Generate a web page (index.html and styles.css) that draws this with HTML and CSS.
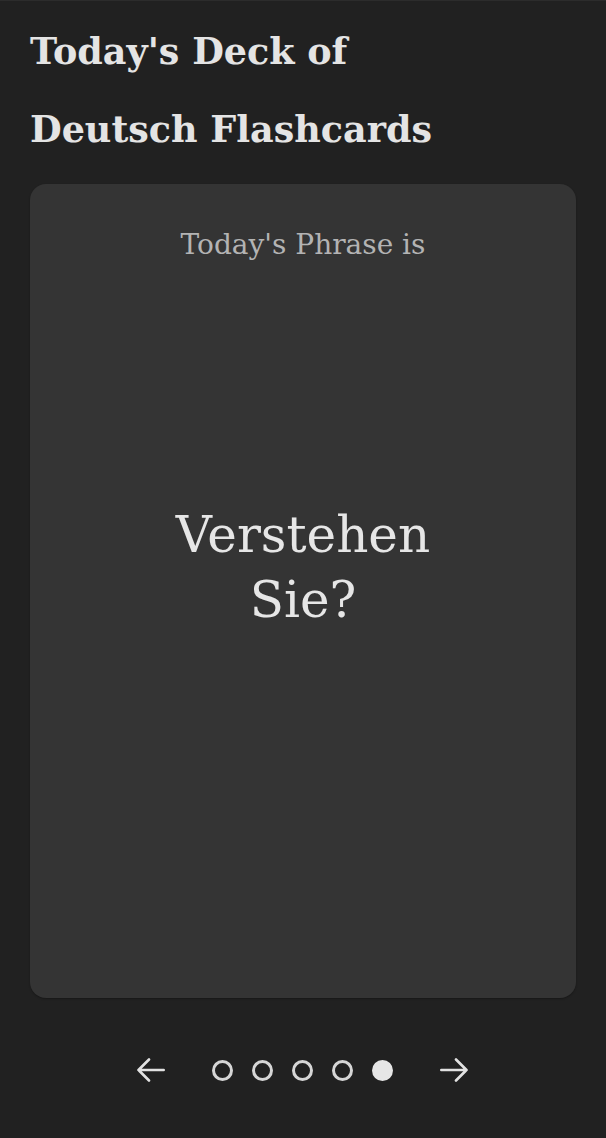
FILE: index.html
```html
<!DOCTYPE html>
<html lang="en">
<head>
<meta charset="utf-8">
<title>Deutsch Flashcards</title>
<link rel="stylesheet" href="styles.css">
</head>
<body>
<main class="page">
  <h1 class="title">Today's Deck of<br>Deutsch Flashcards</h1>
  <section class="card">
    <p class="card-label">Today's Phrase is</p>
    <p class="card-phrase">Verstehen<br>Sie?</p>
  </section>
  <nav class="pager">
    <button class="arrow" aria-label="Previous">
      <svg viewBox="0 0 28 28" width="28" height="28"><path d="M26.7 14H1.5M12 3.5L1.5 14 12 24.5" fill="none" stroke="currentColor" stroke-width="2.6" stroke-linecap="round" stroke-linejoin="round"/></svg>
    </button>
    <div class="dots">
      <span class="dot"></span>
      <span class="dot"></span>
      <span class="dot"></span>
      <span class="dot"></span>
      <span class="dot active"></span>
    </div>
    <button class="arrow" aria-label="Next">
      <svg viewBox="0 0 28 28" width="28" height="28"><path d="M1.3 14h25.2M16 3.5L26.5 14 16 24.5" fill="none" stroke="currentColor" stroke-width="2.6" stroke-linecap="round" stroke-linejoin="round"/></svg>
    </button>
  </nav>
</main>
</body>
</html>
```
FILE: styles.css
```css
html, body {
  margin: 0;
  padding: 0;
  background: #212121;
}
body {
  font-family: "DejaVu Serif", "Liberation Serif", serif;
  color: #e2e2e2;
  border-top: 1px solid #2c2c2c;
}
.page {
  padding: 0 30px;
  display: flex;
  flex-direction: column;
}
.title {
  margin: 0;
  padding-top: 12px;
  font-size: 36.5px;
  line-height: 78px;
  font-weight: bold;
  color: #e4e4e4;
}
.card {
  margin-top: 15px;
  height: 814px;
  background: #343434;
  border-radius: 16px;
  display: flex;
  flex-direction: column;
  align-items: center;
  box-shadow: 0 1px 2px rgba(0,0,0,0.3);
}
.card-label {
  margin: 43px 0 0;
  font-size: 28px;
  line-height: 36px;
  color: #b3b3b3;
}
.card-phrase {
  margin: 240px 0 0;
  font-size: 50px;
  line-height: 65px;
  text-align: center;
  color: #e6e6e6;
}
.pager {
  margin-top: 58px;
  display: flex;
  align-items: center;
  justify-content: center;
  gap: 47px;
  padding-right: 2px;
}
.arrow {
  background: none;
  border: 0;
  padding: 0;
  color: #e2e2e2;
  width: 28px;
  height: 28px;
  display: flex;
}
.dots {
  display: flex;
  gap: 19px;
}
.dot {
  width: 15px;
  height: 15px;
  border: 3px solid #d6d6d6;
  border-radius: 50%;
}
.dot.active {
  background: #e6e6e6;
  border-color: #e6e6e6;
}
```
